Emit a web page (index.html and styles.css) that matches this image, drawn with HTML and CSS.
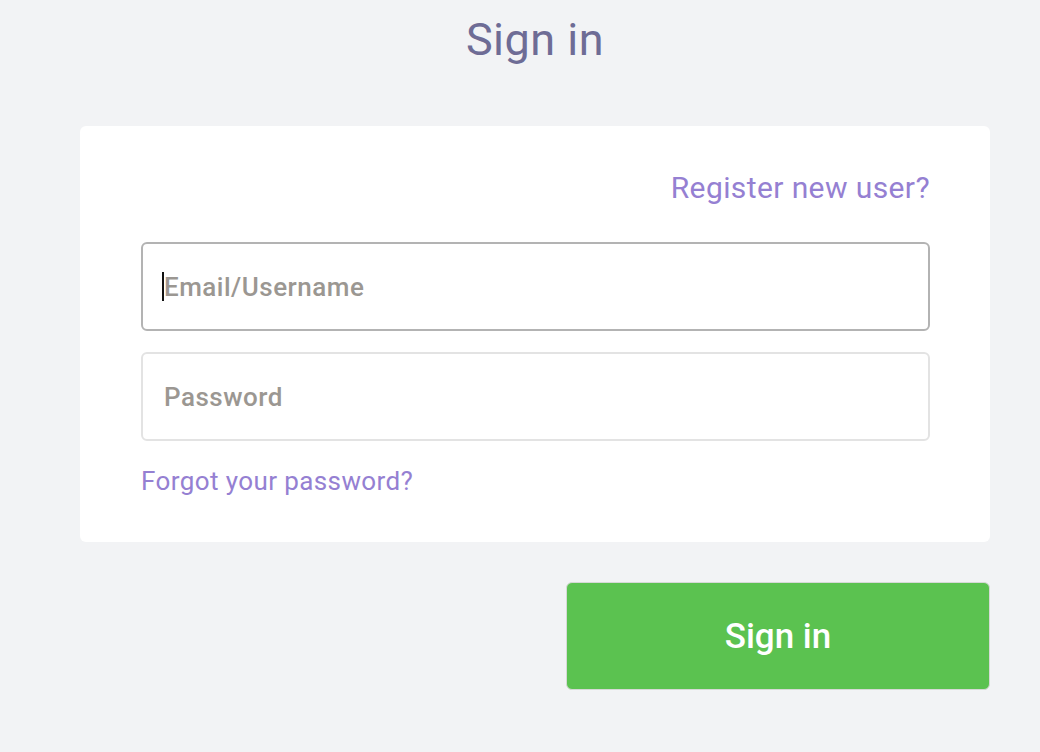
FILE: index.html
```html
<html>

<head>
    <meta charset="UTF-8" />
    <title>Sign in</title>
    <link rel="stylesheet" href="styles.css">
</head>

<body>
    <div class="page">
        <h1 class="title">Sign in</h1>
        <form class="card">
            <div class="register"><a href="#">Register new user?</a></div>
            <div class="field-wrap">
                <input class="field active" type="text" placeholder="Email/Username" autocomplete="off">
                <span class="caret"></span>
            </div>
            <input class="field" type="password" placeholder="Password" autocomplete="off">
            <a class="forgot" href="#">Forgot your password?</a>
        </form>
        <div class="actions">
            <button class="submit" type="button">Sign in</button>
        </div>
    </div>
</body>

</html>
```

FILE: styles.css
```css
body {
    font-family: Roboto, 'Open Sans', sans-serif;
    background-color: #F2F3F5;
    margin: 0;
    padding: 0;
}

.page {
    width: 910px;
    margin-left: 80px;
    display: flex;
    flex-direction: column;
}

.title {
    font-size: 45px;
    font-weight: 400;
    line-height: 1;
    text-align: center;
    color: #6E6C95;
    margin: 17px 0 0 0;
    padding: 0;
    letter-spacing: 0.5px;
}

.card {
    background-color: #FFFFFF;
    border-radius: 6px;
    margin: 64px 0 0 0;
    padding: 44px 60px 45px 61px;
    display: flex;
    flex-direction: column;
}

.card a {
    color: #9580D2;
    text-decoration: none;
}

.register {
    text-align: right;
    font-size: 30px;
    line-height: 36px;
    font-weight: 400;
    letter-spacing: 0.4px;
}

.field-wrap {
    position: relative;
    display: flex;
    flex-direction: column;
    margin-top: 36px;
}

.caret {
    position: absolute;
    left: 21px;
    top: 30px;
    width: 2px;
    height: 29px;
    background-color: #111111;
}

.field {
    box-sizing: border-box;
    height: 89px;
    margin: 21px 0 0 0;
    padding: 0 21px;
    border: 2px solid #E3E3E3;
    border-radius: 6px;
    font-family: Roboto, sans-serif;
    font-size: 26px;
    font-weight: 500;
    letter-spacing: 0.5px;
    color: #333333;
    background-color: #FFFFFF;
    outline: none;
}

.field.active {
    border-color: #B3B3B3;
    margin-top: 0;
}

.field::placeholder {
    color: #9B9792;
}

.forgot {
    margin-top: 24px;
    font-size: 26px;
    line-height: 32px;
    font-weight: 400;
    letter-spacing: 0.4px;
}

.actions {
    display: flex;
    justify-content: flex-end;
    margin-top: 40px;
}

.submit {
    width: 424px;
    height: 108px;
    background-color: #5BC250;
    border: 1px solid #D6D9D6;
    border-radius: 6px;
    color: #FFFFFF;
    font-family: Roboto, sans-serif;
    font-size: 35px;
    font-weight: 500;
    cursor: pointer;
}
```
